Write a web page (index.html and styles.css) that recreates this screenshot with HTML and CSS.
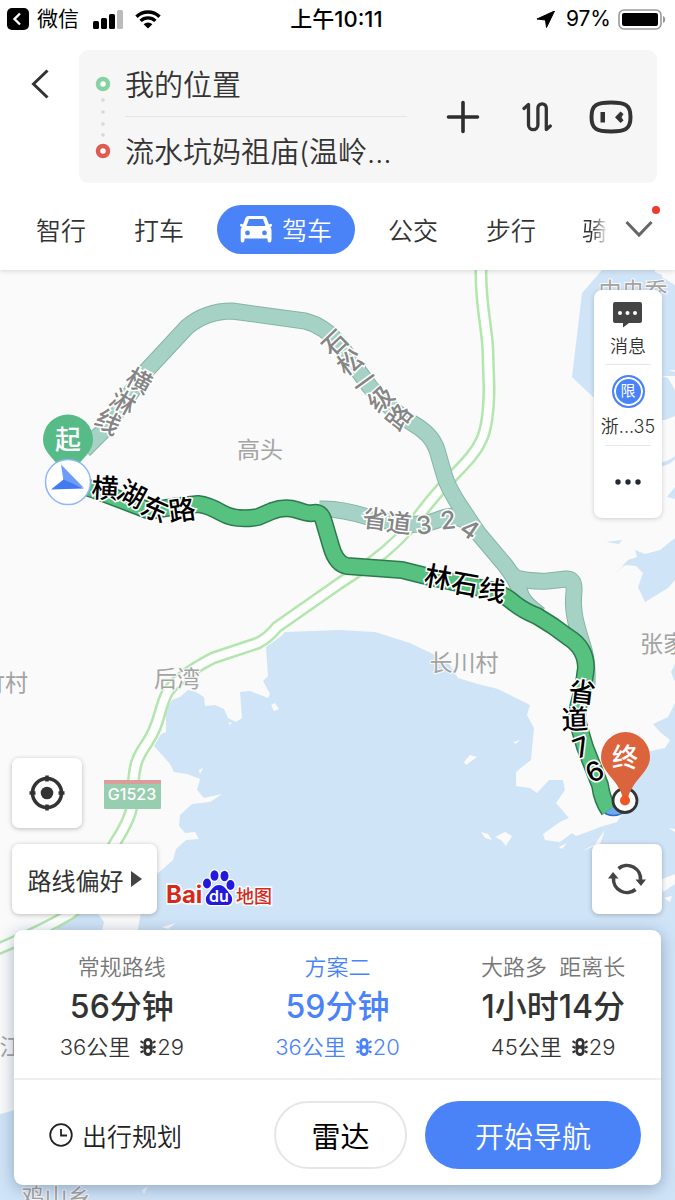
FILE: index.html
```
<!DOCTYPE html>
<html lang="zh-CN">
<head>
    <meta charset="UTF-8">
    <title>百度地图 - 驾车路线</title>
    <meta name="viewport" content="width=device-width, initial-scale=1.0">
    <link rel="stylesheet" href="styles.css">
</head>
<body>

<header class="top">
    <div class="status">
        <div class="status-left">
            <svg width="22" height="22" viewBox="0 0 22 22"><rect width="22" height="22" rx="5"/><path d="M13 5.500 7.500 11l5.500 5.500" fill="none" stroke="#fff" stroke-width="2.400"/></svg>
            <span>微信</span>
            <svg class="signal" width="30" height="19" viewBox="0 0 30 19"><rect y="11" width="6" height="8" rx="1.500"/><rect x="8" y="8" width="6" height="11" rx="1.500"/><rect x="16" y="4" width="6" height="15" rx="1.500"/><rect x="24" width="6" height="19" rx="1.500" fill="#bbb"/></svg>
            <svg width="26" height="19" viewBox="0 0 26 19"><path d="M1.500 6.700a16.500 16.500 0 0 1 23 0M5.600 10.900a10.600 10.600 0 0 1 14.800 0" fill="none" stroke="#000" stroke-width="3.400"/><path d="M8.600 14.200a6.300 6.300 0 0 1 8.800 0L13 18.600z"/></svg>
        </div>
        <div class="status-time">上午10:11</div>
        <div class="status-right">
            <svg width="18" height="17" viewBox="0 0 18 17"><path d="M17.500 0 9.500 16.500 8.500 9 0 8z" stroke="#000"/></svg>
            <span>97%</span>
            <svg width="48" height="21" viewBox="0 0 48 21"><rect x="1" y="1" width="42" height="19" rx="5" fill="none" stroke="#999" stroke-width="1.600"/><rect x="4" y="4" width="36" height="13" rx="2"/><path d="M45 7c3 1 3 6 0 7z" fill="#999"/></svg>
        </div>
    </div>

    <div class="search">
        <button class="back" type="button" aria-label="返回">
            <svg width="18" height="30" viewBox="0 0 18 30"><path d="M16.500 1.500 2.500 15l14 13.500" fill="none" stroke="#333" stroke-width="3"/></svg>
        </button>
        <div class="search-box">
            <svg class="marks" width="16" height="84" viewBox="0 0 16 84">
                <circle cx="8" cy="9" r="5" fill="#fff" stroke="#86d3a1" stroke-width="4.500"/>
                <circle cx="8" cy="76" r="5" fill="#fff" stroke="#e05a54" stroke-width="4.500"/>
                <g fill="#d8d8d8"><circle cx="8" cy="25" r="1.800"/><circle cx="8" cy="37" r="1.800"/><circle cx="8" cy="49" r="1.800"/><circle cx="8" cy="60" r="1.800"/></g>
            </svg>
            <div class="fields">
                <input type="text" aria-label="起点" value="我的位置">
                <input type="text" aria-label="终点" value="流水坑妈祖庙(温岭…">
            </div>
            <div class="search-tools">
                <button type="button" aria-label="添加途经点">
                    <svg width="34" height="34" viewBox="0 0 34 34"><path d="M17 2.500v29M2.500 17h29" stroke="#2d2d2d" stroke-width="3.600" stroke-linecap="round"/></svg>
                </button>
                <button type="button" aria-label="交换起终点">
                    <svg width="30" height="32" viewBox="0 0 30 32"><path d="M2 7.500 6.500 3.500V24a4.700 4.700 0 0 0 9.400 0V7a4.200 4.200 0 0 1 8.400 0V28.500L28.300 25" fill="none" stroke="#333" stroke-width="3.300" stroke-linecap="round" stroke-linejoin="round"/></svg>
                </button>
                <button type="button" aria-label="语音助手">
                    <svg width="44" height="34" viewBox="0 0 44 34"><path d="M22 2.500c14 0 19.500 2 19.500 14.500S36 31.500 22 31.500 2.500 29.500 2.500 17 8 2.500 22 2.500z" fill="none" stroke="#333" stroke-width="4"/><path d="M11.500 12h4.500v10.500h-4.500zM26 17.200l5.500-5.700 3 2.400-2 3.300 2 3.300-3 2.500z" fill="#333"/></svg>
                </button>
            </div>
        </div>
    </div>

    <nav class="tabs">
        <div class="tab-list">
            <button type="button">智行</button>
            <button type="button">打车</button>
            <button type="button" class="active">
                <svg width="32" height="27" viewBox="0 0 32 27"><path fill="#fff" fill-rule="evenodd" d="M8.500 0h15q2.200 0 3 2l2.500 6.500 2-.8q1 0 1 1.500t-1.300 1.600l-.4.300q1.200 1.300 1.200 3V24q0 2.500-2 2.500T27.500 24v-1.500h-23V24q0 2.500-2 2.500T.7 24V14q0-1.700 1.200-3l-.5-.3Q0 10.700 0 9.300t1-1.500l2 .7L5.500 2q.8-2 3-2zM9 3 6.500 10h19L23 3zM7.500 14.500a2.400 2.400 0 1 0 0 4.800 2.400 2.400 0 0 0 0-4.800zm17 0a2.400 2.400 0 1 0 0 4.800 2.400 2.400 0 0 0 0-4.800z"/></svg>
                驾车
            </button>
            <button type="button">公交</button>
            <button type="button">步行</button>
            <button type="button" class="cut">骑</button>
        </div>
        <button class="more" type="button" aria-label="更多出行方式">
            <svg width="28" height="18" viewBox="0 0 28 18"><path d="M1.500 2 14 15 26.500 2" fill="none" stroke="#666" stroke-width="3"/></svg>
            <span class="dot"></span>
        </button>
    </nav>
</header>

<main class="map">
    <svg class="map-canvas" viewBox="0 270 675 930" preserveAspectRatio="xMidYMid slice">
        <rect y="270" width="675" height="930" fill="#fafafa"/>

        <!-- water -->
        <g fill="#d0e4f7">
            <path d="M340 630 285 632 280 637 266 647 268 676 263 681 270 694 268 698 258 694 250 691 240 692 242 718 236 722 228 718 224 709 215 705 205 706 204 697 196 692 188 690 180 697 172 700 166 710 166 732 161 734 154 746 162 755 170 764 174 772 187 774 200 779 197 790 204 798 222 794 210 802 192 804 180 815 179 826 185 833 195 832 199 839 186 840 176 849 173 860 157 874 148 892 141 912 137 935 137 1110H14L8 1112 0 1114V1200H675V703L668 717 653 724 660 732 670 740 665 748 655 750 648 752 640 770 624 790 622 814 617 822 600 827 590 831 576 836 572 833 560 842 545 840 543 834 560 822 569 818 556 803 565 790 563 780 549 780 537 793 530 788 516 786 516 772 531 760 534 728 527 715 530 705 498 689 478 684 458 678 450 665 435 655 410 643 375 632z"/>
            <path d="M50 935 76 912H97L104 922 100 940z"/>
            <path d="M602 270 582 293 572 377 593 397H662V376H675V372L662 368V275L650 270z"/>
            <path d="M650 270 675 285V370H655V270zM655 374 668 378 675 390V416L665 420H655z"/>
            <path d="M662 462q7-1 13-6v3q-5 6-13 7zM667 497l8-10v12zM606 542l16-2-3 4zM612 575 625 565 622 566 628 560 637 557 635 550 645 554 660 550 675 538V580L668 588 645 602 638 587 643 573 636 566 626 565z"/>
            <path d="M671 672l4-8v18z"/>
        </g>
        <!-- islets -->
        <g fill="#fafafa">
            <path d="M464 762 470 755 477 757 466 765zM513 742 520 740 516 744zM481 832 488 834 492 840 485 838zM495 837 505 832 512 836 506 846 501 840zM559 847 567 843 562 849zM582 851 595 844 605 830 600 844zM668 828l7 1v3zM660 880l15-6v10l-12 8zM664 898l8-2-2 6z"/>
            <path d="M271 705l4-2 4 6-5 2zM228 723l4-1-2 3zM199 770l4-2-3 6zM162 927l14-4-8 6zM142 1190l6-4-4 8z"/>
        </g>

        <!-- highway G1523 -->
        <g fill="none" stroke-linejoin="round">
            <path stroke="#b2e6ad" stroke-width="13" d="M481 268C480 305 488 330 488 355L489 387C489 440 480 448 452 477Q435 494 418 517T372 562L340 583 277 627Q268 638 258 643L213 658Q178 676 167 693C158 712 160 724 147 743S135 768 133 785L132 805Q131 818 115 843C100 870 95 895 70 914Q40 932-5 950"/>
            <path stroke="#fff" stroke-width="8" d="M481 268C480 305 488 330 488 355L489 387C489 440 480 448 452 477Q435 494 418 517T372 562L340 583 277 627Q268 638 258 643L213 658Q178 676 167 693C158 712 160 724 147 743S135 768 133 785L132 805Q131 818 115 843C100 870 95 895 70 914Q40 932-5 950"/>
        </g>

        <!-- alternative routes -->
        <g fill="none" stroke-linejoin="round">
            <g stroke="#86b5a6" stroke-width="17">
                <path d="M320 509Q340 508 368 517L400 524Q425 526 440 519T472 525"/>
                <path d="M84 450 104 430 147 370 187 327Q206 311 232 311L305 321Q325 326 340 345L370 387Q390 410 412 423 432 434 437 450C446 480 444 480 458 503L478 533 505 565Q518 582 520 592T540 615"/>
                <path d="M512 577Q530 582 548 581L566 579Q575 578 574 592C571 615 580 635 584 650Q588 665 587 685"/>
            </g>
            <g stroke="#a5d2c5" stroke-width="15">
                <path d="M320 509Q340 508 368 517L400 524Q425 526 440 519T472 525"/>
                <path d="M84 450 104 430 147 370 187 327Q206 311 232 311L305 321Q325 326 340 345L370 387Q390 410 412 423 432 434 437 450C446 480 444 480 458 503L478 533 505 565Q518 582 520 592T540 615"/>
                <path d="M512 577Q530 582 548 581L566 579Q575 578 574 592C571 615 580 635 584 650Q588 665 587 685"/>
            </g>
        </g>

        <!-- selected route -->
        <g fill="none" stroke-linejoin="round">
            <path stroke="#2f6cc0" stroke-width="17" d="M603 798Q608 812 620 806L628 800"/>
            <path stroke="#6ea8f5" stroke-width="14" d="M603 798Q608 812 620 806L628 800"/>
            <path stroke="#2c7a4e" stroke-width="18" d="M70 482 95 490 150 511Q175 506 198 504 208 505 222 513T258 517L272 511Q285 506 297 510T313 513Q321 511 324 522L331 546Q336 564 347 566L402 570 430 577 490 590Q504 594 514 603 524 611 537 616L553 626 568 637Q586 648 586 668L583 690Q577 706 577 720L585 747 600 785Q602 800 609 810"/>
            <path stroke="#57c17f" stroke-width="15" d="M70 482 95 490 150 511Q175 506 198 504 208 505 222 513T258 517L272 511Q285 506 297 510T313 513Q321 511 324 522L331 546Q336 564 347 566L402 570 430 577 490 590Q504 594 514 603 524 611 537 616L553 626 568 637Q586 648 586 668L583 690Q577 706 577 720L585 747 600 785Q602 800 609 810"/>
        </g>

        <!-- place names -->
        <g class="place">
            <text x="260" y="458">高头</text>
            <text x="177" y="687">后湾</text>
            <text x="464" y="671">长川村</text>
            <text x="-18" y="691" text-anchor="start" class="from-left">竹村</text>
            <text x="640" y="652" class="from-left">张家</text>
            <text x="633" y="299">中央乔</text>
            <text x="11" y="1055">江</text>
            <text x="56" y="1205">鸡山乡</text>
        </g>

        <!-- road names, one glyph per text so that they follow the road -->
        <g class="road">
            <text transform="translate(139 381) rotate(28)" dy="9">横</text>
            <text transform="translate(123 402) rotate(30)" dy="9">淋</text>
            <text transform="translate(108 422) rotate(30)" dy="9">线</text>
            <text transform="translate(335 343) rotate(-44)" dy="9">石</text>
            <text transform="translate(350 362) rotate(-36)" dy="9">松</text>
            <text transform="translate(365 382) rotate(-36)" dy="9">一</text>
            <text transform="translate(381 399) rotate(-42)" dy="9">级</text>
            <text transform="translate(399 417) rotate(-52)" dy="9">路</text>
            <text transform="translate(375 519) rotate(7)" dy="9">省</text>
            <text transform="translate(399 523) rotate(7)" dy="9">道</text>
            <text transform="translate(424 525) rotate(-4)" dy="9">3</text>
            <text transform="translate(448 520) rotate(-6)" dy="9">2</text>
            <text transform="translate(470 529) rotate(35)" dy="9">4</text>
        </g>
        <g class="road main">
            <text transform="translate(105 488) rotate(3)" dy="10">横</text>
            <text transform="translate(132 494) rotate(28)" dy="10">湖</text>
            <text transform="translate(155 509) rotate(24)" dy="10">东</text>
            <text transform="translate(182 510) rotate(-8)" dy="10">路</text>
            <text transform="translate(438 577) rotate(10)" dy="10">林</text>
            <text transform="translate(465 584) rotate(10)" dy="10">石</text>
            <text transform="translate(492 590) rotate(10)" dy="10">线</text>
            <text transform="translate(582 692) rotate(7)" dy="10">省</text>
            <text transform="translate(575 719) rotate(-2)" dy="10">道</text>
            <text transform="translate(581 747) rotate(-20)" dy="10">7</text>
            <text transform="translate(595 772) rotate(-25)" dy="9">6</text>
        </g>

        <!-- road shield -->
        <rect x="104" y="780" width="57" height="29" rx="1" fill="#98ceb0"/>
        <rect x="104" y="780" width="57" height="4" fill="#dc9c9a"/>
        <text class="shield" x="132" y="800">G1523</text>

        <!-- start -->
        <path d="M68 414.500a25 25 0 0 1 25 25c0 14-14 20-19 33H62c-5-13-19-19-19-33a25 25 0 0 1 25-25z" fill="#57bb87"/>
        <text class="pin" x="68" y="449">起</text>
        <circle cx="68" cy="482" r="22.500" fill="#fff" stroke="#8fb6f7" stroke-width="1.500"/>
        <path d="M61 464.500 63.500 481 84 488z" fill="#6c9cf8"/>
        <path d="M63.500 479.500 84 488.500 51 489.500z" fill="#427af2"/>

        <!-- destination -->
        <circle cx="625" cy="800.500" r="12" fill="#fff" stroke="#333" stroke-width="2.800"/>
        <path d="M625.500 732a25 25 0 0 1 24.500 25c0 15-17 22-22 41h-5c-5-19-22-26-22-41a25 25 0 0 1 24.500-25z" fill="#db643c"/>
        <circle cx="625" cy="800.500" r="5" fill="#ef5624"/>
        <text class="pin" x="625" y="767">终</text>
    </svg>

    <aside class="side-card">
        <button type="button">
            <svg width="30" height="26" viewBox="0 0 30 26"><path d="M2 0h25q2 0 2 2v17q0 2-2 2H16l-6 4.500V21H2q-2 0-2-2V2q0-2 2-2z" fill="#444"/><g fill="#fff"><circle cx="7" cy="11" r="2"/><circle cx="14.500" cy="11" r="2"/><circle cx="22" cy="11" r="2"/></g></svg>
            <span>消息</span>
        </button>
        <button type="button">
            <span class="limit">限</span>
            <span>浙...35</span>
        </button>
        <button type="button" class="dots" aria-label="更多">
            <svg width="26" height="6" viewBox="0 0 26 6" fill="#1f2a36"><circle cx="3" cy="3" r="2.700"/><circle cx="13" cy="3" r="2.700"/><circle cx="23" cy="3" r="2.700"/></svg>
        </button>
    </aside>

    <div class="bottom">
        <div class="controls">
            <div class="controls-left">
                <button type="button" class="square" aria-label="定位">
                    <svg width="36" height="36" viewBox="0 0 36 36"><circle cx="18" cy="18" r="14.500" fill="none" stroke="#333" stroke-width="3.600"/><circle cx="18" cy="18" r="6.300" fill="#333"/><path d="M18 .5v6M18 29.500v6M.5 18h6M29.500 18h6" stroke="#333" stroke-width="3.600"/></svg>
                </button>
                <div class="pref-row">
                    <button type="button" class="pref">路线偏好 <svg width="11" height="16" viewBox="0 0 11 16"><path d="M0 0 11 8 0 16z" fill="#444"/></svg></button>
                    <svg class="logo" width="108" height="38" viewBox="0 0 108 38">
                        <text class="logo-red" x="0" y="34">Bai</text>
                        <g fill="#2319dc" stroke="#fff" stroke-width="2.500" paint-order="stroke">
                            <path d="M53 16c5 0 8 5 10 8 5 4 4 12-2 12H45c-6 0-7-8-2-12 2-3 5-8 10-8z"/>
                            <ellipse cx="41" cy="14.500" rx="4" ry="5"/>
                            <ellipse cx="48.500" cy="6.500" rx="4" ry="5.300"/>
                            <ellipse cx="58.500" cy="7" rx="4" ry="5.300"/>
                            <ellipse cx="64.500" cy="16" rx="4" ry="5"/>
                        </g>
                        <text class="logo-du" x="53" y="33">du</text>
                        <text class="logo-map" x="70" y="34">地图</text>
                    </svg>
                </div>
            </div>
            <button type="button" class="square" aria-label="刷新路线">
                <svg width="38" height="32" viewBox="0 0 38 32"><g fill="none" stroke="#444" stroke-width="3.600"><path d="M10.500 5.500A13.500 13.500 0 0 1 32.500 17M27.500 26.500A13.500 13.500 0 0 1 5.500 15"/></g><path d="M27.500 16.500H38L33 23zM0 15.500h10.500L5 9z" fill="#444"/></svg>
            </button>
        </div>

        <section class="panel">
            <div class="routes">
                <button type="button" class="route">
                    <span class="route-name">常规路线</span>
                    <strong>56分钟</strong>
                    <span class="route-info">36公里 <svg class="light" width="16" height="18" viewBox="0 0 16 18"><use href="#lamp"/></svg>29</span>
                </button>
                <button type="button" class="route selected">
                    <span class="route-name">方案二</span>
                    <strong>59分钟</strong>
                    <span class="route-info">36公里 <svg class="light" width="16" height="18" viewBox="0 0 16 18"><use href="#lamp"/></svg>20</span>
                </button>
                <button type="button" class="route">
                    <span class="route-name">大路多&nbsp; 距离长</span>
                    <strong>1小时14分</strong>
                    <span class="route-info">45公里 <svg class="light" width="16" height="18" viewBox="0 0 16 18"><use href="#lamp"/></svg>29</span>
                </button>
            </div>
            <div class="actions">
                <button type="button" class="plan">
                    <svg width="24" height="24" viewBox="0 0 24 24"><path d="M12 1.200a10.800 10.800 0 1 0 0 21.600 10.800 10.800 0 0 0 0-21.600zM12 6v6.500h6" fill="none" stroke="#222" stroke-width="1.800"/></svg>
                    出行规划
                </button>
                <button type="button" class="radar">雷达</button>
                <button type="button" class="start">开始导航</button>
            </div>
        </section>
    </div>
</main>

<svg class="defs" width="0" height="0">
    <defs>
        <g id="lamp">
            <path fill="currentColor" fill-rule="evenodd" d="M8 0a4.500 4.500 0 0 1 4.500 4.500v9a4.500 4.500 0 0 1-9 0v-9A4.500 4.500 0 0 1 8 0zM8 3a2 2.300 0 1 0 0 4.600A2 2.300 0 0 0 8 3zM8 10.400a2 2.300 0 1 0 0 4.600 2 2.300 0 0 0 0-4.600z"/>
            <path stroke="currentColor" stroke-width="2" d="M.5 3.200 3.500 5M.5 8.500 3.500 10M.5 14.500l3-1.500M15.500 3.200l-3 1.800M15.500 8.500l-3 1.500M15.500 14.500l-3-1.500"/>
        </g>
    </defs>
</svg>

</body>
</html>
```
FILE: styles.css
```
* {
    box-sizing: border-box;
}
body {
    margin: 0;
    min-height: 100vh;
    display: flex;
    flex-direction: column;
    font-family: Inter, "Noto Sans CJK SC", sans-serif;
    font-weight: 350;
    color: #333;
    background: #fff;
}
button, input {
    font: inherit;
    color: inherit;
    background: none;
    border: 0;
    padding: 0;
    margin: 0;
}
button {
    display: flex;
    align-items: center;
    justify-content: center;
    white-space: nowrap;
}
svg {
    display: block;
    flex-shrink: 0;
}
.defs {
    position: absolute;
}

/* header */
.top {
    position: relative;
    z-index: 1;
    background: #fff;
    box-shadow: 0 1px 5px rgba(0, 0, 0, 0.15);
}
.status {
    display: grid;
    grid-template-columns: 1fr auto 1fr;
    align-items: center;
    height: 38px;
    padding: 0 9px 0 7px;
    font-size: 21px;
    line-height: 24px;
    font-weight: 400;
    color: #000;
}
.status-left, .status-right {
    display: flex;
    align-items: center;
    gap: 8px;
}
.signal {
    margin: 0 4px 0 6px;
}
.status-time {
    font-size: 22px;
    font-weight: 500;
}
.status-right {
    justify-content: flex-end;
    gap: 7px;
}
.status-right span {
    margin-left: 4px;
}
.search {
    display: flex;
    padding: 12px 18px 0 0;
}
.back {
    width: 79px;
    height: 68px;
}
.search-box {
    flex: 1;
    display: flex;
    align-items: center;
    min-width: 0;
    padding: 0 24px 0 16px;
    background: #f6f6f6;
    border-radius: 9px;
}
.fields {
    flex: 1;
    min-width: 0;
    margin-left: 14px;
}
.fields input {
    display: block;
    width: 100%;
    height: 66px;
    font-size: 29px;
}
.fields input + input {
    border-top: 1px solid #e6e6e6;
    height: 67px;
}
.search-tools {
    display: flex;
    gap: 30px;
    margin-left: 34px;
}
.search-tools button {
    width: 44px;
}

.tabs {
    display: flex;
    align-items: center;
    height: 87px;
    padding: 5px 22px 0 12px;
    font-size: 25px;
}
.tab-list {
    flex: 1;
    display: flex;
    min-width: 0;
    overflow: hidden;
}
.tab-list button {
    height: 49px;
    padding: 0 24px;
    flex-shrink: 0;
}
.tab-list .active {
    gap: 10px;
    margin: 0 9px;
    padding: 0 23px;
    border-radius: 25px;
    color: #fff;
    background: #4a83f7;
}
.tab-list .cut {
    padding: 0 0 0 22px;
    -webkit-mask-image: linear-gradient(90deg, #000 32px, transparent 48px);
    mask-image: linear-gradient(90deg, #000 32px, transparent 48px);
}
.more {
    position: relative;
    margin-left: 16px;
}
.dot {
    position: absolute;
    top: -14px;
    right: -7px;
    width: 8px;
    height: 8px;
    border-radius: 50%;
    background: #ee3b30;
}

/* map */
.map {
    position: relative;
    flex: 1;
    min-height: 760px;
    overflow: hidden;
}
.map-canvas {
    position: absolute;
    width: 100%;
    height: 100%;
}
.place {
    font-size: 23px;
    font-weight: 400;
    fill: #a3a3a3;
    stroke: #fafafa;
    stroke-width: 2px;
    paint-order: stroke;
    text-anchor: middle;
}
.from-left {
    text-anchor: start;
}
.road {
    font-size: 25px;
    font-weight: 500;
    fill: #858585;
    stroke: #fff;
    stroke-width: 3px;
    paint-order: stroke;
    text-anchor: middle;
}
.road.main {
    font-size: 27px;
    fill: #000;
}
.shield {
    font-size: 16px;
    font-weight: 500;
    fill: #fff;
    text-anchor: middle;
}
.pin {
    font-size: 26px;
    font-weight: 500;
    fill: #fff;
    text-anchor: middle;
}

.side-card {
    position: absolute;
    top: 20px;
    right: 13px;
    width: 68px;
    padding: 0 11px;
    background: #fff;
    border-radius: 8px;
    box-shadow: 0 1px 5px rgba(0, 0, 0, 0.18);
    font-size: 18px;
    line-height: 22px;
}
.side-card button {
    flex-direction: column;
    width: 100%;
    height: 74px;
    gap: 8px;
    padding-top: 6px;
}
.side-card button + button {
    height: 81px;
    padding-top: 2px;
    border-top: 1px solid #e6e6e6;
}
.side-card button.dots {
    height: 73px;
    padding: 0;
}
.side-card .limit {
    width: 33px;
    height: 33px;
    border-radius: 50%;
    border: 2px solid #4a83f7;
    box-shadow: inset 0 0 0 2px #fff;
    background: #4a83f7;
    color: #fff;
    font-size: 15px;
    line-height: 28px;
    font-weight: 400;
    text-align: center;
}

.bottom {
    position: absolute;
    left: 0;
    right: 0;
    bottom: 15px;
}
.controls {
    display: flex;
    justify-content: space-between;
    align-items: flex-end;
    padding: 0 13px 16px 12px;
}
.controls-left {
    display: flex;
    flex-direction: column;
    gap: 16px;
}
.square, .pref {
    width: 70px;
    height: 70px;
    background: #fff;
    border-radius: 7px;
    box-shadow: 0 1px 5px rgba(0, 0, 0, 0.25);
}
.pref-row {
    display: flex;
    align-items: flex-end;
    gap: 9px;
}
.pref {
    width: 145px;
    gap: 7px;
    font-size: 24px;
    font-weight: 400;
}
.logo {
    margin-bottom: 7px;
    overflow: visible;
}
.logo text {
    stroke: #fff;
    stroke-width: 3px;
    paint-order: stroke;
}
.logo-red {
    font-size: 24px;
    font-weight: 700;
    fill: #d42a1c;
}
.logo .logo-du {
    font-size: 16px;
    font-weight: 600;
    fill: #fff;
    stroke: none;
    text-anchor: middle;
}
.logo-map {
    font-size: 18px;
    font-weight: 500;
    fill: #d42a1c;
}

/* route panel */
.panel {
    margin: 0 14px;
    background: #fff;
    border-radius: 9px;
    box-shadow: 0 3px 16px rgba(40, 70, 110, 0.4);
}
.routes {
    display: grid;
    grid-template-columns: repeat(3, 1fr);
    padding: 20px 0 14px;
    border-bottom: 2px solid #f0f0f0;
}
.route {
    flex-direction: column;
    font-size: 22px;
}
.route-name {
    line-height: 34px;
    color: #777;
}
.route strong {
    font-size: 32px;
    line-height: 46px;
    font-weight: 500;
}
.route-info {
    display: flex;
    align-items: center;
    line-height: 34px;
}
.light {
    margin-left: 10px;
    margin-right: 1px;
}
.route.selected, .selected .route-name {
    color: #4a83f7;
}
.actions {
    display: flex;
    align-items: center;
    padding: 21px 20px 16px 35px;
}
.plan {
    gap: 9px;
    margin-right: auto;
    font-size: 25px;
    color: #222;
}
.radar, .start {
    height: 68px;
    border-radius: 34px;
    font-size: 29px;
}
.radar {
    width: 133px;
    margin-right: 18px;
    border: 2px solid #e6e6e6;
    font-weight: 400;
    color: #000;
}
.start {
    width: 216px;
    color: #fff;
    background: #4a83f7;
}
```
